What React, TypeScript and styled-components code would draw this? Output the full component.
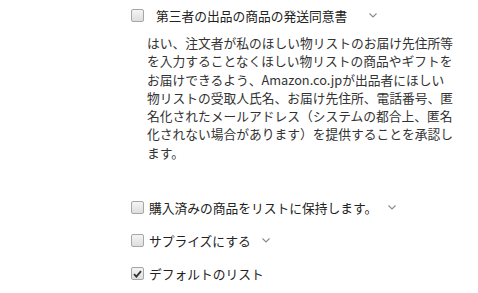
import styled, { createGlobalStyle } from "styled-components";

const GlobalStyle = createGlobalStyle`
  html, body {
    margin: 0;
    padding: 0;
    background: #ffffff;
  }
  body {
    font-family: "Noto Sans CJK JP", "Noto Sans", sans-serif;
    color: #222;
  }
`;

const Wrapper = styled.div`
  width: 478px;
  height: 293px;
  box-sizing: border-box;
  padding: 5px 0 0 131px;
  display: flex;
  flex-direction: column;
  overflow: hidden;
`;

const Row = styled.label<{ $gap: number; $height: number }>`
  display: flex;
  align-items: center;
  height: ${(p) => p.$height}px;
  gap: ${(p) => p.$gap}px;
  font-size: 12.75px;
  color: #222;
  white-space: nowrap;
`;

const Box = styled.span<{ $checked?: boolean }>`
  width: 11px;
  height: 11px;
  flex: none;
  border: 1px solid #a6a6a6;
  border-radius: 2px;
  background: linear-gradient(#f4f4f4, #dedede);
  display: flex;
  align-items: center;
  justify-content: center;
`;

const Chevron = styled.svg<{ $left: number }>`
  width: 8px;
  height: 5px;
  margin-left: ${(p) => p.$left}px;
  flex: none;
`;

const Paragraph = styled.p`
  margin: 9px 0 0 16px;
  font-size: 12.75px;
  line-height: 18.3px;
  color: #333;
  white-space: nowrap;
`;

const Options = styled.div`
  margin-top: 29px;
  display: flex;
  flex-direction: column;
`;

function Check({ checked }: { checked?: boolean }) {
  return (
    <Box $checked={checked}>
      {checked && (
        <svg width="9" height="8" viewBox="0 0 9 8">
          <path d="M1 4.2 L3.4 6.6 L8 1.2" fill="none" stroke="#333" strokeWidth="1.8" />
        </svg>
      )}
    </Box>
  );
}

function Arrow({ left }: { left: number }) {
  return (
    <Chevron $left={left} viewBox="0 0 8 5">
      <polyline points="0.5,0.5 4,4 7.5,0.5" fill="none" stroke="#8a8a8a" strokeWidth="1.1" />
    </Chevron>
  );
}

export default function App() {
  const lines = [
    "はい、注文者が私のほしい物リストのお届け先住所等",
    "を入力することなくほしい物リストの商品やギフトを",
    "お届けできるよう、Amazon.co.jpが出品者にほしい",
    "物リストの受取人氏名、お届け先住所、電話番号、匿",
    "名化されたメールアドレス（システムの都合上、匿名",
    "化されない場合があります）を提供することを承認し",
    "ます。",
  ];

  return (
    <>
      <GlobalStyle />
      <Wrapper>
        <Row $gap={12} $height={20}>
          <Check />
          <span>第三者の出品の商品の発送同意書</span>
          <Arrow left={10} />
        </Row>
        <Paragraph>
          {lines.map((l, i) => (
            <span key={i}>
              {l}
              {i < lines.length - 1 && <br />}
            </span>
          ))}
        </Paragraph>
        <Options>
          <Row $gap={5} $height={33}>
            <Check />
            <span>購入済みの商品をリストに保持します。</span>
            <Arrow left={6} />
          </Row>
          <Row $gap={5} $height={33}>
            <Check />
            <span>サプライズにする</span>
            <Arrow left={6} />
          </Row>
          <Row $gap={5} $height={33}>
            <Check checked />
            <span>デフォルトのリスト</span>
          </Row>
        </Options>
      </Wrapper>
    </>
  );
}
